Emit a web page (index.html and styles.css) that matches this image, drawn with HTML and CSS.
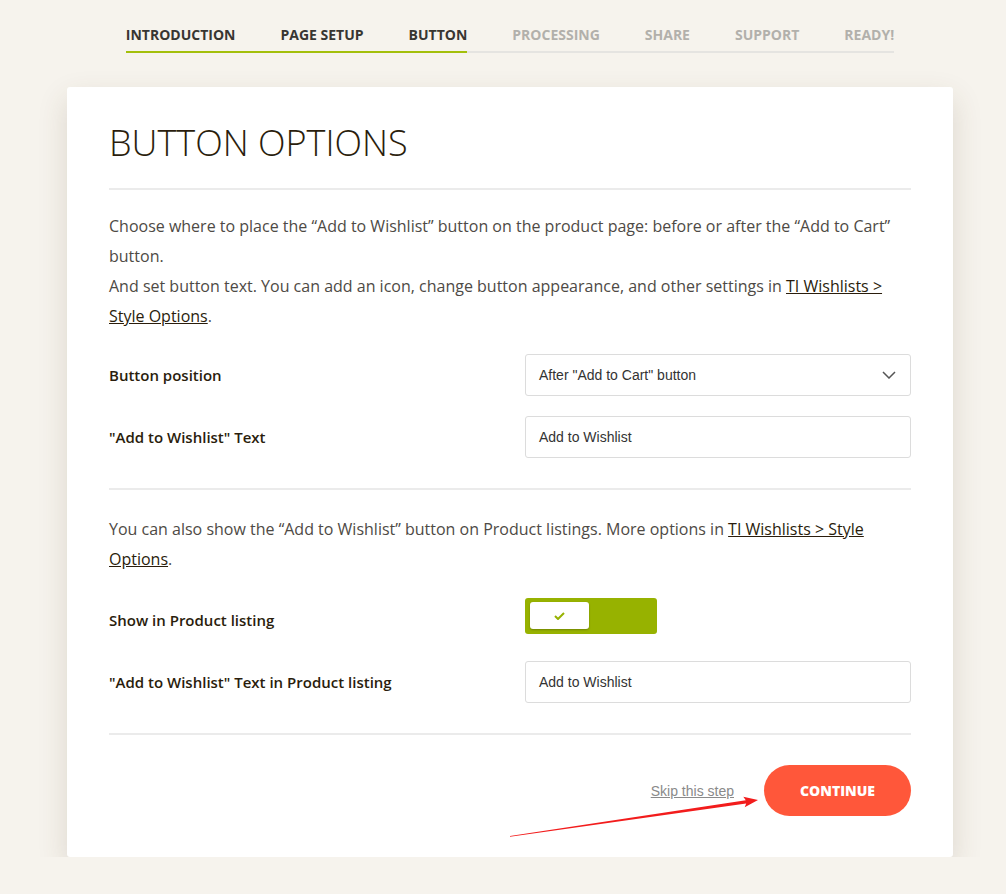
FILE: index.html
```html
<!DOCTYPE html>
<html lang="en">

<head>
  <meta charset="UTF-8">
  <meta name="viewport" content="width=device-width, initial-scale=1.0">
  <title>Wishlist setup wizard</title>
  <link rel="stylesheet" href="styles.css">
</head>

<body>
  <ul class="steps">
    <li class="step done">Introduction</li>
    <li class="step done">Page Setup</li>
    <li class="step done">Button</li>
    <li class="step">Processing</li>
    <li class="step">Share</li>
    <li class="step">Support</li>
    <li class="step">Ready!</li>
  </ul>

  <div class="card">
    <h1 class="title">Button Options</h1>

    <p class="desc">Choose where to place the “Add to Wishlist” button on the product page: before or after the “Add to Cart” button.<br>
      And set button text. You can add an icon, change button appearance, and other settings in <a href="#">TI Wishlists &gt; Style Options</a>.</p>

    <div class="row">
      <label class="label">Button position</label>
      <div class="select">
        <span>After "Add to Cart" button</span>
        <svg class="chevron" width="14" height="8" viewBox="0 0 14 8">
          <path d="M1 1 L7 7 L13 1" fill="none" stroke="#555" stroke-width="1.5" />
        </svg>
      </div>
    </div>
    <div class="row">
      <label class="label">"Add to Wishlist" Text</label>
      <div class="input">Add to Wishlist</div>
    </div>

    <hr class="sep">

    <p class="desc desc-listing">You can also show the “Add to Wishlist” button on Product listings. More options in <a href="#">TI Wishlists &gt; Style Options</a>.</p>

    <div class="row">
      <label class="label">Show in Product listing</label>
      <div class="field">
        <div class="toggle">
          <span class="knob">
            <svg width="11" height="8" viewBox="0 0 11 8">
              <path d="M1 4 L4 7 L10 1" fill="none" stroke="#97b200" stroke-width="2" />
            </svg>
          </span>
        </div>
      </div>
    </div>
    <div class="row">
      <label class="label">"Add to Wishlist" Text in Product listing</label>
      <div class="input">Add to Wishlist</div>
    </div>

    <hr class="sep">

    <div class="footer">
      <a href="#" class="skip">Skip this step</a>
      <button class="continue">Continue</button>
    </div>
  </div>

  <svg class="annotation" width="1006" height="894" viewBox="0 0 1006 894">
    <polygon points="510,836 745.8,800.2 743.3,796.8 758,800 744.7,807.2 746.2,803.4 510,836.8" fill="#f21c1c" />
  </svg>
</body>

</html>
```

FILE: styles.css
```css
body {
  margin: 0;
  padding-left: 14px;
  background: #f6f3ed;
  font-family: "Open Sans", "Liberation Sans", sans-serif;
  color: #4e4a45;
}

.steps {
  display: flex;
  justify-content: center;
  list-style: none;
  margin: 0;
  padding: 25px 0 0;
}

.steps .step {
  padding-left: 45px;
  padding-bottom: 6px;
  border-bottom: 2px solid #e5e4e1;
  font-size: 14px;
  line-height: 20px;
  font-weight: 700;
  text-transform: uppercase;
  color: #b2b0ab;
}

.steps .step:first-child {
  padding-left: 0;
}

.steps .done {
  color: #383632;
  border-bottom-color: #a3bf0b;
}

.card {
  width: 802px;
  margin: 34px auto 0;
  padding: 32px 42px 41px;
  background: #fff;
  border-radius: 3px;
  box-shadow: 0 12px 30px rgba(90, 70, 40, 0.16);
}

.title {
  margin: 0;
  font-size: 36px;
  line-height: 48px;
  font-weight: 300;
  color: #2a1d0c;
  text-transform: uppercase;
  padding-bottom: 21px;
  border-bottom: 2px solid #ebebeb;
}

.desc {
  margin: 21px 0 23px;
  font-size: 16px;
  line-height: 30px;
}

.desc-listing {
  margin: 24px 0 24px;
}

.desc a {
  color: #2a1d0c;
}

.row {
  display: grid;
  grid-template-columns: 1fr 386px;
  align-items: center;
  margin-bottom: 20px;
}

.label {
  font-size: 15px;
  font-weight: 600;
  color: #2a1d0c;
}

.select,
.input {
  box-sizing: border-box;
  height: 42px;
  display: flex;
  align-items: center;
  justify-content: space-between;
  padding: 0 14px 0 13px;
  border: 1px solid #dcdcdc;
  border-radius: 3px;
  font-family: "Liberation Sans", Arial, sans-serif;
  font-size: 14px;
  color: #333;
}

.field {
  height: 43px;
  display: flex;
  align-items: flex-start;
}

.toggle {
  width: 132px;
  height: 36px;
  box-sizing: border-box;
  padding: 4px 0 5px 5px;
  background: #97b200;
  border-radius: 3px;
}

.toggle .knob {
  width: 59px;
  height: 27px;
  display: flex;
  align-items: center;
  justify-content: center;
  background: #fff;
  border-radius: 3px;
  box-shadow: 0 1px 2px rgba(0, 0, 0, 0.25);
}

.sep {
  margin: 30px 0 0;
  border: 0;
  border-top: 2px solid #ebebeb;
}

.footer {
  display: flex;
  justify-content: flex-end;
  align-items: center;
  gap: 30px;
  margin-top: 30px;
}

.skip {
  font-family: "Liberation Sans", Arial, sans-serif;
  font-size: 14px;
  color: #8a8a8a;
}

.continue {
  width: 147px;
  height: 51px;
  border: 0;
  border-radius: 26px;
  background: #ff573a;
  color: #fff;
  font-family: "Open Sans", sans-serif;
  font-size: 14px;
  font-weight: 800;
  text-transform: uppercase;
}

.annotation {
  position: absolute;
  top: 0;
  left: 0;
  pointer-events: none;
}
```
